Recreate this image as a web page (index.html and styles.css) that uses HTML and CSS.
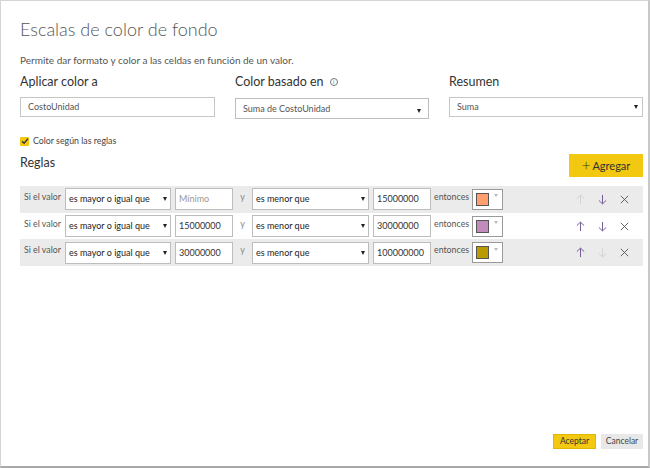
FILE: index.html
```html
<!DOCTYPE html>
<html lang="es">
<head>
<meta charset="utf-8">
<link rel="stylesheet" href="styles.css">
</head>
<body>
<div class="dialog">
  <h1 class="title">Escalas de color de fondo</h1>
  <p class="desc">Permite dar formato y color a las celdas en función de un valor.</p>
  <div class="fields">
    <div class="field">
      <div class="label">Aplicar color a</div>
      <div class="box">CostoUnidad</div>
    </div>
    <div class="field">
      <div class="label">Color basado en <span class="info">i</span></div>
      <div class="box sel raised">Suma de CostoUnidad<span class="caret low"></span></div>
    </div>
    <div class="field">
      <div class="label">Resumen</div>
      <div class="box sel">Suma<span class="caret"></span></div>
    </div>
  </div>
  <div class="check"><span class="cb"><svg width="8" height="8" viewBox="0 0 8 8"><path d="M1 4.2 L3.1 6.2 L7 1.6" fill="none" stroke="#333" stroke-width="1.4"/></svg></span>Color según las reglas</div>
  <div class="rules-head">
    <div class="label">Reglas</div>
    <div class="add"><span class="plus">+</span>Agregar</div>
  </div>
  <div class="rules">
    <div class="rule shade">
      <span class="si">Si el valor</span>
      <div class="rsel w1">es mayor o igual que<span class="caret"></span></div>
      <div class="rin muted">Mínimo</div>
      <span class="y">y</span>
      <div class="rsel w2">es menor que<span class="caret"></span></div>
      <div class="rin">15000000</div>
      <span class="ent">entonces</span>
      <div class="picker"><span class="sw c1"></span><span class="pcaret"></span></div>
      <div class="acts">
        <svg class="ic off" viewBox="0 0 12 12"><path d="M6 11 V1.5 M2 5 L6 1.2 L10 5" fill="none" stroke-width="1"/></svg>
        <svg class="ic on" viewBox="0 0 12 12"><path d="M6 1 V10.5 M2 7 L6 10.8 L10 7" fill="none" stroke-width="1"/></svg>
        <svg class="ic x" viewBox="0 0 12 12"><path d="M2 2 L10 10 M10 2 L2 10" fill="none" stroke-width="1"/></svg>
      </div>
    </div>
    <div class="rule">
      <span class="si">Si el valor</span>
      <div class="rsel w1">es mayor o igual que<span class="caret"></span></div>
      <div class="rin">15000000</div>
      <span class="y">y</span>
      <div class="rsel w2">es menor que<span class="caret"></span></div>
      <div class="rin">30000000</div>
      <span class="ent">entonces</span>
      <div class="picker"><span class="sw c2"></span><span class="pcaret"></span></div>
      <div class="acts">
        <svg class="ic on" viewBox="0 0 12 12"><path d="M6 11 V1.5 M2 5 L6 1.2 L10 5" fill="none" stroke-width="1"/></svg>
        <svg class="ic on" viewBox="0 0 12 12"><path d="M6 1 V10.5 M2 7 L6 10.8 L10 7" fill="none" stroke-width="1"/></svg>
        <svg class="ic x" viewBox="0 0 12 12"><path d="M2 2 L10 10 M10 2 L2 10" fill="none" stroke-width="1"/></svg>
      </div>
    </div>
    <div class="rule shade">
      <span class="si">Si el valor</span>
      <div class="rsel w1">es mayor o igual que<span class="caret"></span></div>
      <div class="rin">30000000</div>
      <span class="y">y</span>
      <div class="rsel w2">es menor que<span class="caret"></span></div>
      <div class="rin">100000000</div>
      <span class="ent">entonces</span>
      <div class="picker"><span class="sw c3"></span><span class="pcaret"></span></div>
      <div class="acts">
        <svg class="ic on" viewBox="0 0 12 12"><path d="M6 11 V1.5 M2 5 L6 1.2 L10 5" fill="none" stroke-width="1"/></svg>
        <svg class="ic off" viewBox="0 0 12 12"><path d="M6 1 V10.5 M2 7 L6 10.8 L10 7" fill="none" stroke-width="1"/></svg>
        <svg class="ic x" viewBox="0 0 12 12"><path d="M2 2 L10 10 M10 2 L2 10" fill="none" stroke-width="1"/></svg>
      </div>
    </div>
  </div>
  <div class="spacer"></div>
  <div class="footer">
    <div class="btn ok">Aceptar</div>
    <div class="btn cancel">Cancelar</div>
  </div>
</div>
</body>
</html>
```

FILE: styles.css
```css
* { box-sizing: border-box; }
html, body { margin: 0; padding: 0; }
body {
  width: 650px;
  height: 468px;
  background: #fff;
  font-family: Lato, "Open Sans", sans-serif;
  color: #333;
  overflow: hidden;
}
.dialog {
  width: 650px;
  height: 468px;
  border-top: 1px solid #d4d4d4;
  border-left: 1px solid #d4d4d4;
  border-right: 2px solid #c8c8c8;
  border-bottom: 2px solid #a8a8a8;
  padding: 0 5px 0 19px;
  display: flex;
  flex-direction: column;
}
.title {
  margin: 15px 0 0;
  font-weight: 300;
  font-size: 18px;
  line-height: 26px;
  color: #555;
}
.desc {
  margin: 11px 0 0;
  font-size: 10px;
  line-height: 14px;
  color: #555;
}
.fields {
  display: grid;
  grid-template-columns: 195px 194px 194px;
  column-gap: 20px;
  margin-top: 7px;
}
.label {
  font-size: 12.5px;
  line-height: 16px;
  color: #333;
}
.info {
  display: inline-block;
  width: 8px;
  height: 8px;
  border: 1px solid #777;
  border-radius: 50%;
  font-size: 6px;
  line-height: 6px;
  text-align: center;
  color: #777;
  vertical-align: 2px;
  margin-left: 3px;
}
.box {
  margin-top: 7px;
  height: 20px;
  border: 1px solid #c6c6c6;
  font-size: 9px;
  line-height: 18px;
  padding: 0 7px;
  color: #555;
}
.box.raised { margin-top: 8px; height: 21px; border-color: #bdbdbd; }
.sel { display: flex; align-items: center; justify-content: space-between; }
.caret {
  display: inline-block;
  width: 0; height: 0;
  border-left: 2.5px solid transparent;
  border-right: 2.5px solid transparent;
  border-top: 4px solid #222;
  margin-right: -3px;
}
.caret.low { margin-top: 5px; margin-right: 0; }
.check {
  margin-top: 16px;
  display: flex;
  align-items: center;
  font-size: 8.8px;
  line-height: 12px;
  color: #444;
}
.cb {
  width: 9px;
  height: 9px;
  background: #f2c811;
  border-radius: 1px;
  margin-right: 4px;
  display: flex;
  align-items: center;
  justify-content: center;
}
.cb svg { display: block; }
.rules-head {
  display: flex;
  justify-content: space-between;
  align-items: flex-start;
  margin-top: 7px;
}
.rules-head .label { margin-top: 1px; }
.add {
  width: 74px;
  height: 23px;
  background: #f2c811;
  font-size: 11px;
  line-height: 23px;
  color: #333;
  text-align: center;
}
.plus { font-size: 15px; font-weight: 300; margin-right: 2px; vertical-align: -1px; }
.rules { margin-top: 9px; width: 623px; }
.rule {
  height: 26.7px;
  display: flex;
  align-items: center;
  font-size: 9px;
  color: #444;
}
.rule.shade { background: #ebebeb; }
.si { width: 45px; padding-left: 4px; align-self: flex-start; margin-top: 5px; color: #555; font-size: 8.8px; }
.rsel, .rin {
  height: 22px;
  background: #fff;
  border: 1px solid #bdbdbd;
  font-size: 9px;
  line-height: 20px;
  color: #222;
  padding: 0 3px;
}
.rsel { display: flex; align-items: center; justify-content: space-between; padding-right: 6px; }
.w1 { width: 106px; }
.w2 { width: 117px; }
.rin { width: 58px; margin-left: 4px; color: #333; }
.rin.muted { color: #999; }
.y { width: 19px; text-align: center; color: #888; align-self: flex-start; margin-top: 5px; }
.ent { width: 41px; padding-left: 3px; color: #555; font-size: 8.8px; align-self: flex-start; margin-top: 5px; }
.picker {
  width: 31px;
  height: 21px;
  border: 1px solid #9a9a9a;
  background: #fff;
  display: flex;
  align-items: center;
  padding-left: 3px;
}
.sw { width: 13px; height: 13px; border: 1px solid #555; }
.c1 { background: #ff9f6e; }
.c2 { background: #c18cbc; }
.c3 { background: #b99a00; }
.pcaret {
  width: 0; height: 0;
  border-left: 2px solid transparent;
  border-right: 2px solid transparent;
  border-top: 3px solid #bbb;
  margin-left: 5px;
  margin-top: -7px;
}
.acts {
  margin-left: auto;
  display: flex;
  gap: 11px;
  padding-right: 13px;
}
.ic { width: 11px; height: 11px; display: block; }
.ic.on { stroke: #6b4f8c; }
.ic.off { stroke: #d0d0d0; }
.ic.x { stroke: #555; }
.spacer { flex: 1; }
.footer {
  display: flex;
  justify-content: flex-end;
  gap: 5px;
  margin-bottom: 17px;
}
.btn {
  height: 15px;
  font-size: 8.5px;
  line-height: 15px;
  text-align: center;
  color: #333;
}
.ok { width: 43px; background: #f2c811; border: 1px solid #e0b800; line-height: 13px; }
.cancel { width: 42px; background: #e8e8e8; color: #444; }
```
